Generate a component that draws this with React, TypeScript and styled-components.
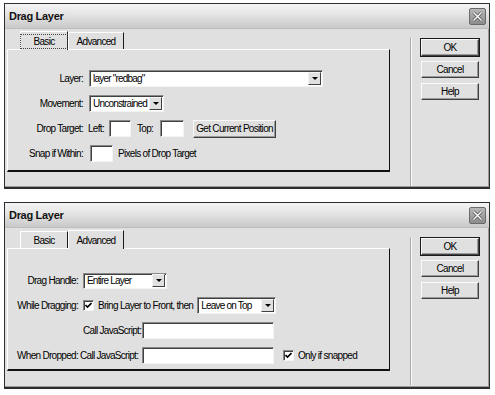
import React from 'react';
import styled, { createGlobalStyle } from 'styled-components';

const GlobalStyle = createGlobalStyle`
  body {
    margin: 0;
    background: #fff;
    font-family: "Liberation Sans", Arial, sans-serif;
    font-size: 10px;
    letter-spacing: -0.7px;
    color: #000;
  }
`;

// page holding both dialogs
const Page = styled.div`
  display: flex;
  flex-direction: column;
  gap: 13px;
  padding: 3px 0 0 4px;
`;

const Dialog = styled.div<{ $h: number }>`
  width: 486px;
  height: ${({ $h }) => $h}px;
  box-sizing: border-box;
  border: 1px solid #2e2e2e;
  border-bottom-width: 2px;
  background: #e0e0e0;
  display: flex;
  flex-direction: column;
  box-shadow: inset -1px -1px 0 #9a9a9a;
`;

const TitleBar = styled.div`
  height: 24px;
  flex: none;
  display: flex;
  align-items: center;
  justify-content: space-between;
  padding: 0 3px 0 4px;
  background: linear-gradient(#f4f4f4, #e6e6e6 40%, #c9c9c9);
  border-bottom: 1px solid #bdbdbd;
`;

const Title = styled.span`
  font-weight: bold;
  font-size: 11px;
  letter-spacing: -0.3px;
  color: #111;
`;

const CloseBtn = styled.div`
  width: 15px;
  height: 15px;
  border: 1px solid #6a6a6a;
  border-radius: 2px;
  background: linear-gradient(#b8b8b8, #8c8c8c);
  display: flex;
  align-items: center;
  justify-content: center;
`;

const Body = styled.div`
  flex: 1;
  display: flex;
  padding: 2px 0 0 2px;
`;

const Left = styled.div`
  width: 383px;
  display: flex;
  flex-direction: column;
`;

const TabStrip = styled.div`
  display: flex;
  padding-left: 13px;
  height: 18px;
  align-items: flex-end;
  position: relative;
  z-index: 1;
`;

const Tab = styled.div<{ $w: number; $active?: boolean }>`
  width: ${({ $w }) => $w}px;
  height: ${({ $active }) => ($active ? 19 : 17)}px;
  margin-bottom: ${({ $active }) => ($active ? -1 : 0)}px;
  box-sizing: border-box;
  display: flex;
  align-items: center;
  justify-content: center;
  background: #e0e0e0;
  border-right: 1px solid #1a1a1a;
  border-top: 1px solid #fff;
  border-left: 1px solid #fff;
`;

const Focus = styled.span`
  outline: 1px dotted #444;
  outline-offset: 1px;
  padding: 0 12px;
`;

const Panel = styled.div<{ $top: number }>`
  height: 123px;
  box-sizing: border-box;
  border-top: 1px solid #fff;
  border-left: 1px solid #fff;
  border-right: 1px solid #111;
  border-bottom: 2px solid #111;
  display: flex;
  flex-direction: column;
  padding-top: ${({ $top }) => $top}px;
`;

const Row = styled.div`
  height: 25px;
  display: flex;
  align-items: center;
`;

const Label = styled.span<{ $w: number; $gap: number }>`
  width: ${({ $w }) => $w}px;
  margin-right: ${({ $gap }) => $gap}px;
  text-align: right;
  flex: none;
  white-space: nowrap;
`;

const Text = styled.span<{ $ml?: number; $mr?: number }>`
  margin-left: ${({ $ml }) => $ml ?? 0}px;
  margin-right: ${({ $mr }) => $mr ?? 0}px;
  white-space: nowrap;
`;

const Sunken = styled.div<{ $w: number; $h?: number; $ml?: number }>`
  width: ${({ $w }) => $w}px;
  height: ${({ $h }) => $h ?? 17}px;
  margin-left: ${({ $ml }) => $ml ?? 0}px;
  flex: none;
  box-sizing: border-box;
  background: #fff;
  border-top: 1px solid #8a8a8a;
  border-left: 1px solid #8a8a8a;
  border-right: 1px solid #f4f4f4;
  border-bottom: 1px solid #f4f4f4;
  box-shadow: inset 1px 1px 0 #404040;
  display: flex;
  align-items: center;
  padding-left: 3px;
  overflow: hidden;
  white-space: nowrap;
`;

const SelectText = styled.span`
  flex: 1;
  min-width: 0;
  overflow: hidden;
  letter-spacing: -0.8px;
`;

const Arrow = styled.div`
  width: 13px;
  height: 13px;
  margin-right: 1px;
  flex: none;
  box-sizing: border-box;
  background: #e0e0e0;
  border-top: 1px solid #f4f4f4;
  border-left: 1px solid #f4f4f4;
  border-right: 1px solid #404040;
  border-bottom: 1px solid #404040;
  display: flex;
  align-items: center;
  justify-content: center;
  &::after {
    content: '';
    border-left: 3px solid transparent;
    border-right: 3px solid transparent;
    border-top: 3px solid #000;
  }
`;

const Button = styled.div<{ $w: number; $h?: number; $default?: boolean; $ml?: number }>`
  width: ${({ $w }) => $w}px;
  height: ${({ $h }) => $h ?? 17}px;
  margin-left: ${({ $ml }) => $ml ?? 0}px;
  flex: none;
  box-sizing: border-box;
  background: #e0e0e0;
  border-top: 1px solid #fafafa;
  border-left: 1px solid #fafafa;
  border-right: 1px solid #404040;
  border-bottom: 1px solid #404040;
  box-shadow: inset -1px -1px 0 #9a9a9a
    ${({ $default }) => ($default ? ', 0 0 0 1px #1a1a1a' : '')};
  display: flex;
  align-items: center;
  justify-content: center;
  white-space: nowrap;
`;

const Separator = styled.div`
  width: 0;
  height: 148px;
  margin: 7px 0 0 20px;
  border-left: 1px solid #a8a8a8;
  border-right: 1px solid #fafafa;
`;

const ButtonCol = styled.div`
  display: flex;
  flex-direction: column;
  gap: 5px;
  margin: 8px 0 0 9px;
`;

const Check = styled.div<{ $ml?: number }>`
  width: 11px;
  height: 11px;
  margin-left: ${({ $ml }) => $ml ?? 0}px;
  flex: none;
  box-sizing: border-box;
  background: #fff;
  border-top: 1px solid #8a8a8a;
  border-left: 1px solid #8a8a8a;
  border-right: 1px solid #f4f4f4;
  border-bottom: 1px solid #f4f4f4;
  box-shadow: inset 1px 1px 0 #404040;
  display: flex;
  align-items: center;
  justify-content: center;
`;

const CheckMark = () => (
  <svg width="7" height="7" viewBox="0 0 7 7">
    <path d="M0.5 3 L2.5 5 L6.5 1" stroke="#000" strokeWidth="1.6" fill="none" />
  </svg>
);

const CloseIcon = () => (
  <svg width="11" height="11" viewBox="0 0 11 11">
    <path d="M1.5 1.5 L9.5 9.5 M9.5 1.5 L1.5 9.5" stroke="#555" strokeWidth="3" />
    <path d="M1.5 1.5 L9.5 9.5 M9.5 1.5 L1.5 9.5" stroke="#fff" strokeWidth="1.4" />
  </svg>
);

const Select = ({ w, value, h }: { w: number; value: string; h?: number }) => (
  <Sunken $w={w} $h={h}>
    <SelectText>{value}</SelectText>
    <Arrow />
  </Sunken>
);

const Frame = ({ active, h, children }: { active: 'Basic' | 'Advanced'; h: number; children: React.ReactNode }) => (
  <Dialog $h={h}>
    <TitleBar>
      <Title>Drag Layer</Title>
      <CloseBtn>
        <CloseIcon />
      </CloseBtn>
    </TitleBar>
    <Body>
      <Left>
        <TabStrip>
          <Tab $w={48} $active={active === 'Basic'}>
            {active === 'Basic' ? <Focus>Basic</Focus> : 'Basic'}
          </Tab>
          <Tab $w={56} $active={active === 'Advanced'}>Advanced</Tab>
        </TabStrip>
        {children}
      </Left>
      <Separator />
      <ButtonCol>
        <Button $w={58} $default>OK</Button>
        <Button $w={58}>Cancel</Button>
        <Button $w={58}>Help</Button>
      </ButtonCol>
    </Body>
  </Dialog>
);

export default function App() {
  return (
    <Page>
      <GlobalStyle />
      <Frame active="Basic" h={186}>
        <Panel $top={16}>
          <Row>
            <Label $w={75} $gap={6}>Layer:</Label>
            <Select w={234} value={'layer "redbag"'} />
          </Row>
          <Row>
            <Label $w={75} $gap={6}>Movement:</Label>
            <Select w={75} value="Unconstrained" />
          </Row>
          <Row>
            <Label $w={75} $gap={5}>Drop Target:</Label>
            <Text $mr={5}>Left:</Text>
            <Sunken $w={22} />
            <Text $ml={6} $mr={7}>Top:</Text>
            <Sunken $w={24} />
            <Button $w={83} $h={18} $ml={9}>Get Current Position</Button>
          </Row>
          <Row>
            <Label $w={75} $gap={7}>Snap if Within:</Label>
            <Sunken $w={23} />
            <Text $ml={5}>Pixels of Drop Target</Text>
          </Row>
        </Panel>
      </Frame>
      <Frame active="Advanced" h={187}>
        <Panel $top={19}>
          <Row>
            <Label $w={70} $gap={5}>Drag Handle:</Label>
            <Select w={84} h={16} value="Entire Layer" />
          </Row>
          <Row>
            <Label $w={70} $gap={5}>While Dragging:</Label>
            <Check>
              <CheckMark />
            </Check>
            <Text $ml={4} $mr={4}>Bring Layer to Front, then</Text>
            <Select w={79} value="Leave on Top" />
          </Row>
          <Row>
            <Label $w={70} $gap={5}></Label>
            <Label $w={55} $gap={4}>Call JavaScript:</Label>
            <Sunken $w={132} />
          </Row>
          <Row>
            <Label $w={70} $gap={2}>When Dropped:</Label>
            <Label $w={58} $gap={4}>Call JavaScript:</Label>
            <Sunken $w={132} />
            <Check $ml={9}>
              <CheckMark />
            </Check>
            <Text $ml={4}>Only if snapped</Text>
          </Row>
        </Panel>
      </Frame>
    </Page>
  );
}
